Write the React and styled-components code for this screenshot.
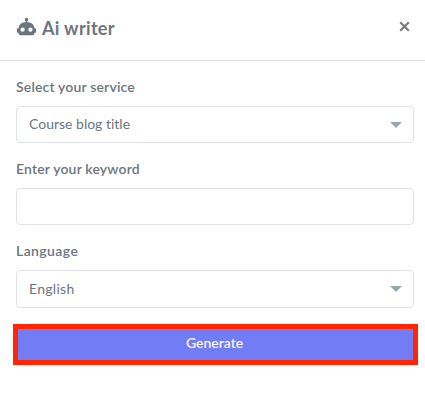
import React from "react";
import styled, { createGlobalStyle } from "styled-components";

const Global = createGlobalStyle`
  * { box-sizing: border-box; }
  body {
    margin: 0;
    background: #fff;
    color: #6c757d;
    font-family: Lato, "Open Sans", sans-serif;
    font-size: 14px;
    font-variant-ligatures: none;
  }
`;

const Panel = styled.main`
  width: 425px;
  height: 402px;
  background: #fff;
  overflow: hidden;
`;

const Header = styled.header`
  display: flex;
  align-items: center;
  height: 61px;
  padding: 0 15px 7px 16px;
  border-bottom: 1px solid #dee2e6;
`;

const Robot = styled.svg`
  width: 21px;
  height: 21px;
  margin: -1px 5px 0 0;
  fill: #6c757d;
`;

const Title = styled.h1`
  flex: 1;
  margin: 2px 0 0;
  font-size: 18px;
  line-height: 24px;
  font-weight: 700;
  letter-spacing: 0.35px;
`;

const CloseButton = styled.button`
  display: flex;
  padding: 0;
  border: 0;
  background: none;
  margin: -1px 0.5px 0 0;
`;

const Form = styled.form`
  display: flex;
  flex-direction: column;
  padding: 16px 11px 0 16px;
`;

const Field = styled.div`
  display: flex;
  flex-direction: column;
  height: 82px;
`;

const Label = styled.label`
  height: 29px;
  line-height: 20px;
  font-weight: 600;
  letter-spacing: ${(p) => p.$spacing || "0.17px"};
`;

const Control = styled.div`
  display: flex;
  align-items: center;
  justify-content: space-between;
  height: ${(p) => p.$height || "37px"};
  padding: 0 11px 0 12px;
  border: 1px solid #dee2e6;
  border-radius: 4px;
  letter-spacing: ${(p) => p.$spacing || "0"};
`;

const Value = styled.span`
  padding-bottom: 2px;
`;

const Input = styled.input`
  height: 37px;
  padding: 0 12px;
  border: 1px solid #dee2e6;
  border-radius: 4px;
  background: #fff;
  color: inherit;
  font: inherit;
  outline: none;
`;

const Caret = styled.span`
  border: 6px solid transparent;
  border-top-color: #98a6ad;
  border-bottom: 0;
`;

const Highlight = styled.div`
  margin: 1px -4px 0 -3px;
  height: 41px;
  border: 5px solid #ff2600;
  box-shadow: 0 0 5px rgba(114, 124, 245, 0.12);
`;

const Submit = styled.button`
  display: block;
  width: 100%;
  height: 31px;
  padding: 0 2px 5px 0;
  border: 0;
  background: #727cf5;
  color: #fff;
  font: inherit;
  font-weight: 500;
  letter-spacing: 0;
`;

function Select({ value, height, spacing }) {
  return (
    <Control $height={height} $spacing={spacing}>
      <Value>{value}</Value>
      <Caret />
    </Control>
  );
}

export default function App() {
  return (
    <>
      <Global />
      <Panel>
        <Header>
          <Robot viewBox="0 0 24 24" aria-hidden="true">
            <path d="M12 2a2 2 0 0 1 2 2c0 .74-.4 1.39-1 1.73V7h1a7 7 0 0 1 7 7h1a1 1 0 0 1 1 1v3a1 1 0 0 1-1 1h-1v1a2 2 0 0 1-2 2H5a2 2 0 0 1-2-2v-1H2a1 1 0 0 1-1-1v-3a1 1 0 0 1 1-1h1a7 7 0 0 1 7-7h1V5.73c-.6-.34-1-.99-1-1.73a2 2 0 0 1 2-2M7.500 13a2.500 2.500 0 0 0 0 5a2.500 2.500 0 0 0 0-5m9 0a2.500 2.500 0 0 0 0 5a2.500 2.500 0 0 0 0-5z" />
          </Robot>
          <Title>Ai writer</Title>
          <CloseButton aria-label="Close">
            <svg width="11" height="11" viewBox="0 0 11 11" fill="none" stroke="#7b7b7b" strokeWidth="2.2">
              <path d="M1.200 1.200 9.800 9.800M9.800 1.200 1.200 9.800" />
            </svg>
          </CloseButton>
        </Header>
        <Form onSubmit={(e) => e.preventDefault()}>
          <Field>
            <Label>Select your service</Label>
            <Select value="Course blog title" />
          </Field>
          <Field>
            <Label htmlFor="keyword">Enter your keyword</Label>
            <Input id="keyword" />
          </Field>
          <Field>
            <Label $spacing="0.4px">Language</Label>
            <Select value="English" height="38px" spacing="0.28px" />
          </Field>
          <Highlight>
            <Submit type="submit">Generate</Submit>
          </Highlight>
        </Form>
      </Panel>
    </>
  );
}
